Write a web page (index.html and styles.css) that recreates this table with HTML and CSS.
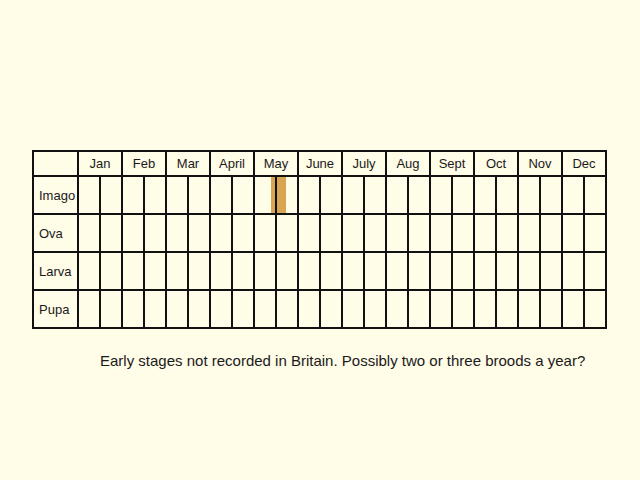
FILE: index.html
```html
<!DOCTYPE html>
<html>
<head>
<meta charset="utf-8">
<link rel="stylesheet" href="styles.css">
</head>
<body>
<div class="page">
  <div class="chart">
    <div class="cell corner"></div>
    <div class="cell month">Jan</div>
    <div class="cell month">Feb</div>
    <div class="cell month">Mar</div>
    <div class="cell month">April</div>
    <div class="cell month">May</div>
    <div class="cell month">June</div>
    <div class="cell month">July</div>
    <div class="cell month">Aug</div>
    <div class="cell month">Sept</div>
    <div class="cell month">Oct</div>
    <div class="cell month">Nov</div>
    <div class="cell month">Dec</div>

    <div class="cell label">Imago</div>
    <div class="cell"></div><div class="cell"></div>
    <div class="cell"></div><div class="cell"></div>
    <div class="cell"></div><div class="cell"></div>
    <div class="cell"></div><div class="cell"></div>
    <div class="cell bar-end"><span class="bar bar-left"></span></div><div class="cell"><span class="bar bar-right"></span></div>
    <div class="cell"></div><div class="cell"></div>
    <div class="cell"></div><div class="cell"></div>
    <div class="cell"></div><div class="cell"></div>
    <div class="cell"></div><div class="cell"></div>
    <div class="cell"></div><div class="cell"></div>
    <div class="cell"></div><div class="cell"></div>
    <div class="cell"></div><div class="cell"></div>

    <div class="cell label">Ova</div>
    <div class="cell"></div><div class="cell"></div>
    <div class="cell"></div><div class="cell"></div>
    <div class="cell"></div><div class="cell"></div>
    <div class="cell"></div><div class="cell"></div>
    <div class="cell"></div><div class="cell"></div>
    <div class="cell"></div><div class="cell"></div>
    <div class="cell"></div><div class="cell"></div>
    <div class="cell"></div><div class="cell"></div>
    <div class="cell"></div><div class="cell"></div>
    <div class="cell"></div><div class="cell"></div>
    <div class="cell"></div><div class="cell"></div>
    <div class="cell"></div><div class="cell"></div>

    <div class="cell label">Larva</div>
    <div class="cell"></div><div class="cell"></div>
    <div class="cell"></div><div class="cell"></div>
    <div class="cell"></div><div class="cell"></div>
    <div class="cell"></div><div class="cell"></div>
    <div class="cell"></div><div class="cell"></div>
    <div class="cell"></div><div class="cell"></div>
    <div class="cell"></div><div class="cell"></div>
    <div class="cell"></div><div class="cell"></div>
    <div class="cell"></div><div class="cell"></div>
    <div class="cell"></div><div class="cell"></div>
    <div class="cell"></div><div class="cell"></div>
    <div class="cell"></div><div class="cell"></div>

    <div class="cell label">Pupa</div>
    <div class="cell"></div><div class="cell"></div>
    <div class="cell"></div><div class="cell"></div>
    <div class="cell"></div><div class="cell"></div>
    <div class="cell"></div><div class="cell"></div>
    <div class="cell"></div><div class="cell"></div>
    <div class="cell"></div><div class="cell"></div>
    <div class="cell"></div><div class="cell"></div>
    <div class="cell"></div><div class="cell"></div>
    <div class="cell"></div><div class="cell"></div>
    <div class="cell"></div><div class="cell"></div>
    <div class="cell"></div><div class="cell"></div>
    <div class="cell"></div><div class="cell"></div>
  </div>
  <p class="note">Early stages not recorded in Britain. Possibly two or three broods a year?</p>
</div>
</body>
</html>
```

FILE: styles.css
```css
html, body {
  margin: 0;
  padding: 0;
  background: #fffce8;
}

body {
  width: 640px;
  height: 480px;
  font-family: "Liberation Sans", Arial, sans-serif;
  color: #1a1a1a;
}

.page {
  padding: 150px 0 0 32px;
}

.chart {
  display: grid;
  grid-template-columns: 43px repeat(24, 20px);
  grid-template-rows: 23px repeat(4, 36px);
  gap: 2px;
  padding: 2px;
  background: #111;
  width: max-content;
}

.cell {
  background: #fffce8;
  display: flex;
  align-items: center;
}

.month {
  grid-column: span 2;
  justify-content: center;
  font-size: 13px;
}

.label {
  font-size: 13px;
  padding-left: 5px;
}

.bar-end {
  justify-content: flex-end;
}

.bar {
  display: block;
  align-self: stretch;
  background: #d8a650;
}

.bar-left {
  width: 4px;
}

.bar-right {
  width: 9px;
}

.note {
  margin: 20px 0 0 68px;
  font-size: 15px;
  line-height: 24px;
}
```
